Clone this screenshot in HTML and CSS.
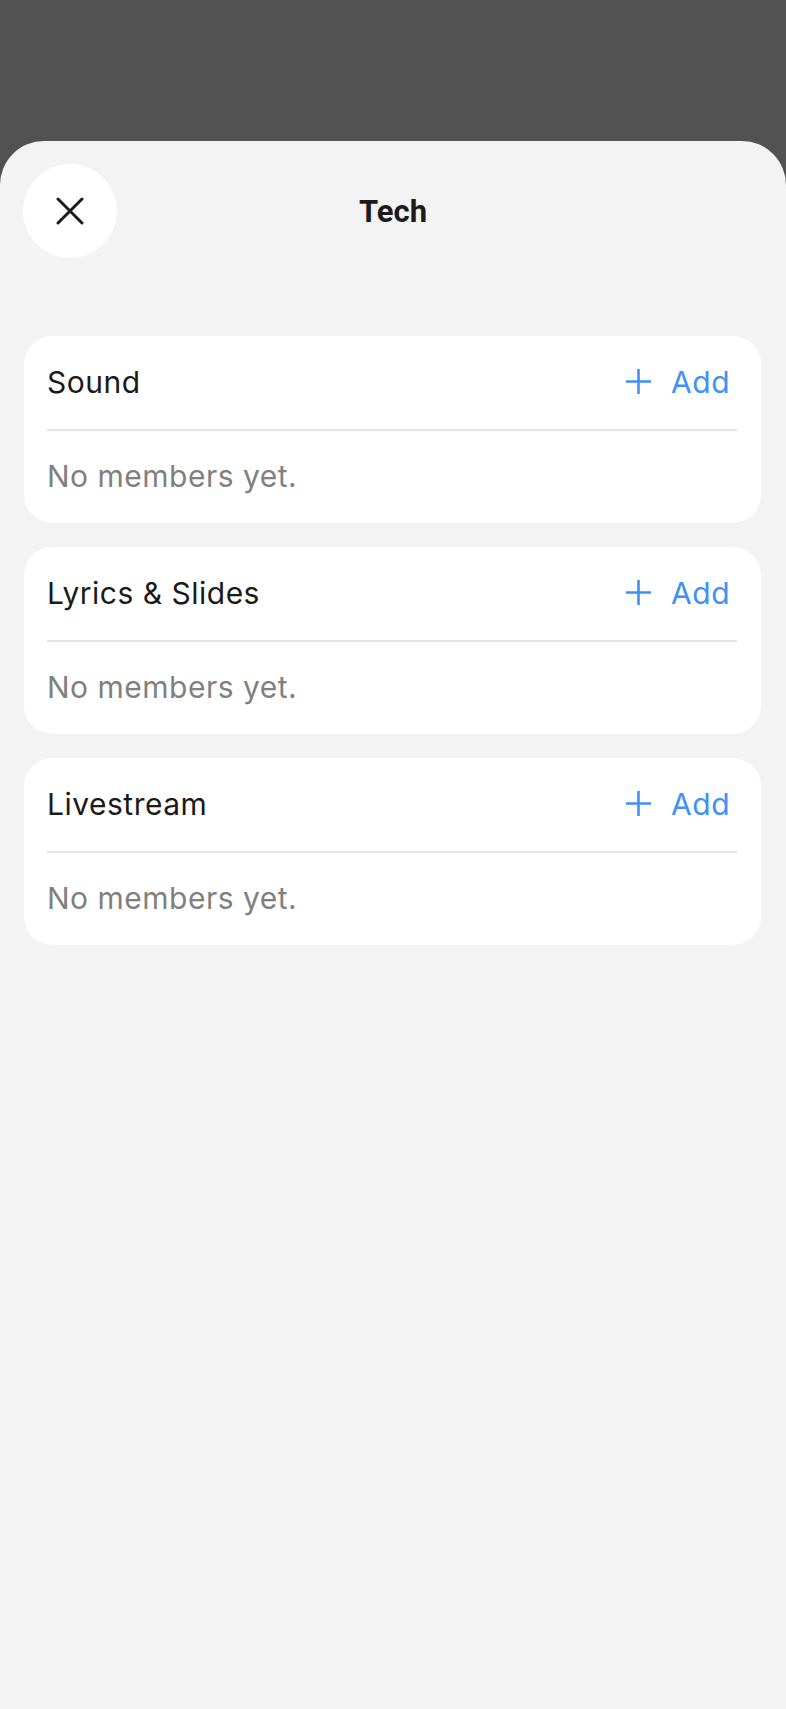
FILE: index.html
```html
<!DOCTYPE html>
<html lang="en">
<head>
    <meta charset="UTF-8">
    <meta name="viewport" content="width=device-width, initial-scale=1.0">
    <title>Tech</title>
    <link rel="stylesheet" href="styles.css">
</head>
<body>

<div class="sheet">
    <div class="sheet-header">
        <button class="close-btn" aria-label="Close">
            <svg width="28" height="28" viewBox="0 0 28 28">
                <path d="M2 2 L26 26 M26 2 L2 26" stroke="#1c1c1c" stroke-width="3" stroke-linecap="round" fill="none"/>
            </svg>
        </button>
        <h1 class="sheet-title">Tech</h1>
        <div></div>
    </div>

    <div class="team-list">
        <div class="team-card">
            <div class="team-head">
                <span class="team-name">Sound</span>
                <button class="add-btn">
                    <svg width="27" height="27" viewBox="0 0 27 27">
                        <path d="M13.5 1 V26 M1 13.5 H26" stroke="#4190f5" stroke-width="2.6" fill="none"/>
                    </svg>
                    Add
                </button>
            </div>
            <div class="team-body">No members yet.</div>
        </div>

        <div class="team-card">
            <div class="team-head">
                <span class="team-name">Lyrics &amp; Slides</span>
                <button class="add-btn">
                    <svg width="27" height="27" viewBox="0 0 27 27">
                        <path d="M13.5 1 V26 M1 13.5 H26" stroke="#4190f5" stroke-width="2.6" fill="none"/>
                    </svg>
                    Add
                </button>
            </div>
            <div class="team-body">No members yet.</div>
        </div>

        <div class="team-card">
            <div class="team-head">
                <span class="team-name">Livestream</span>
                <button class="add-btn">
                    <svg width="27" height="27" viewBox="0 0 27 27">
                        <path d="M13.5 1 V26 M1 13.5 H26" stroke="#4190f5" stroke-width="2.6" fill="none"/>
                    </svg>
                    Add
                </button>
            </div>
            <div class="team-body">No members yet.</div>
        </div>
    </div>
</div>

</body>
</html>
```

FILE: styles.css
```css
body {
    margin: 0;
    background-color: #525252;
    font-family: Inter, "Noto Sans", sans-serif;
}
.sheet {
    margin-top: 141px;
    min-height: 1568px;
    background-color: #f3f3f3;
    border-radius: 44px 44px 0 0;
    padding: 23px 0 0;
    box-sizing: border-box;
}
.sheet-header {
    display: grid;
    grid-template-columns: 94px 1fr 94px;
    align-items: center;
    padding: 0 23px;
    margin-bottom: 78px;
}
.close-btn {
    width: 94px;
    height: 94px;
    border-radius: 50%;
    border: none;
    background-color: #ffffff;
    display: flex;
    align-items: center;
    justify-content: center;
    padding: 0;
    cursor: pointer;
}
.sheet-title {
    margin: 0;
    text-align: center;
    font-family: Roboto, "Liberation Sans", sans-serif;
    font-size: 31px;
    font-weight: 700;
    color: #1c1c1c;
}
.team-list {
    display: flex;
    flex-direction: column;
    gap: 24px;
    padding: 0 25px 0 24px;
}
.team-card {
    background-color: #ffffff;
    border-radius: 28px;
    padding: 0 24px 0 23px;
}
.team-head {
    height: 95px;
    box-sizing: border-box;
    padding-bottom: 2px;
    display: flex;
    align-items: center;
    justify-content: space-between;
    border-bottom: 2px solid #e3e2ea;
}
.team-name {
    font-size: 30px;
    letter-spacing: 0.5px;
    color: #1a1a1a;
}
.add-btn {
    display: flex;
    align-items: center;
    gap: 19px;
    border: none;
    background: none;
    padding: 0 7px 0 0;
    font-family: Inter, "Noto Sans", sans-serif;
    font-size: 30px;
    letter-spacing: 0.5px;
    color: #4190f5;
    cursor: pointer;
}
.team-body {
    height: 92px;
    box-sizing: border-box;
    padding-bottom: 2px;
    display: flex;
    align-items: center;
    font-size: 30px;
    letter-spacing: 0.5px;
    color: #808080;
}
```
